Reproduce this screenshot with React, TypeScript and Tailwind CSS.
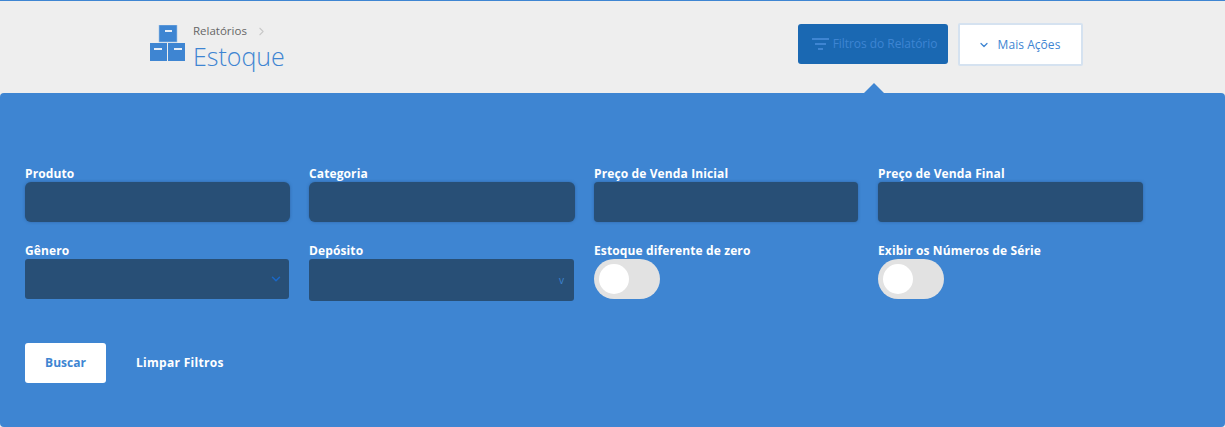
import { ChevronDown, ChevronRight } from "lucide-react";

const font = "font-['Open_Sans','Liberation_Sans',sans-serif]";

function BoxesIcon() {
  return (
    <svg width="36" height="37" viewBox="0 0 36 37" className="shrink-0">
      <rect x="9" y="0" width="18" height="17" fill="#3e85d2" stroke="#9fc2e8" strokeWidth="0.6" />
      <rect x="15" y="5" width="7" height="2" fill="#e6eef8" />
      <rect x="0" y="18" width="17" height="18" fill="#3e85d2" />
      <rect x="4" y="23" width="8" height="2" fill="#e6eef8" />
      <rect x="18" y="18" width="17" height="18" fill="#3e85d2" />
      <rect x="24" y="23" width="8" height="2" fill="#e6eef8" />
    </svg>
  );
}

function FilterIcon() {
  return (
    <svg width="17" height="13" viewBox="0 0 17 13" className="shrink-0" fill="#3e85d2">
      <rect x="0" y="0" width="17" height="2" />
      <rect x="3" y="5" width="11" height="2" />
      <rect x="6" y="10" width="5" height="2" />
    </svg>
  );
}

function Label({ text }: { text: string }) {
  return <label className="block h-[17px] text-[12px] leading-[17px] font-bold tracking-[0.12px] text-white whitespace-nowrap">{text}</label>;
}

function Input({ label, width, rounded = "rounded-[4px]" }: { label: string; width: string; rounded?: string }) {
  return (
    <div className={width}>
      <Label text={label} />
      <div className={`h-10 bg-[#284f76] shadow-[0_0_3px_rgba(30,70,120,0.5)] ${rounded}`} />
    </div>
  );
}

function Toggle({ label }: { label: string }) {
  return (
    <div>
      <Label text={label} />
      <div className="flex h-10 w-[66px] items-center rounded-full bg-[#e2e2e2] pl-[5px]">
        <div className="h-[30px] w-[30px] rounded-full bg-white" />
      </div>
    </div>
  );
}

export default function App() {
  return (
    <div className={`h-[427px] w-[1225px] overflow-hidden bg-[#eeeeee] ${font}`}>
      <div className="h-px bg-[#3e85d2]" />
      <header className="flex h-[92px] pl-[150px] pr-[142px]">
        <div className="flex pt-6">
          <BoxesIcon />
          <div className="ml-[7px]">
            <div className="flex h-[12px] items-center text-[11.5px] text-[#666666]">
              Relatórios
              <ChevronRight size={13} strokeWidth={2} className="ml-2 text-[#c8c8c8]" />
            </div>
            <h1 className="mt-[2px] text-[25px] leading-[34px] font-light text-[#3e85d2]">Estoque</h1>
          </div>
        </div>
        <div className="ml-auto flex gap-[10px] pt-[22px]">
          <button className="mt-px flex h-10 w-[150px] items-center justify-center gap-[4px] rounded-[3px] bg-[#1a68b2] pl-[3px] text-[12px] tracking-[-0.05px] text-[#3e85d2]">
            <FilterIcon />
            Filtros do Relatório
          </button>
          <button className="flex h-[43px] w-[125px] items-center justify-center gap-2 rounded-[2px] border-2 border-[#d5e2f0] bg-white pr-[3px] text-[12px] tracking-[0.05px] text-[#3e85d2]">
            <ChevronDown size={12} strokeWidth={2.5} />
            Mais Ações
          </button>
        </div>
      </header>

      <main className="relative h-[334px] rounded-[4px] bg-[#3e85d2] px-[25px] pt-[72px]">
        <div className="absolute -top-[10px] left-[864px] h-0 w-0 border-x-[10px] border-b-[10px] border-x-transparent border-b-[#3e85d2]" />
        <div className="flex gap-[19px]">
          <Input label="Produto" width="w-[265px]" rounded="rounded-[6px]" />
          <Input label="Categoria" width="w-[266px]" rounded="rounded-[6px]" />
          <Input label="Preço de Venda Inicial" width="mr-px w-[264px]" />
          <Input label="Preço de Venda Final" width="w-[265px]" />
        </div>
        <div className="mt-5 flex h-[59px] gap-[20px]">
          <div className="w-[264px]">
            <Label text="Gênero" />
            <div className="flex h-10 items-center justify-end rounded-[3px] bg-[#284f76] pr-[6px]">
              <ChevronDown size={14} strokeWidth={2.5} className="text-[#1a68c8]" />
            </div>
          </div>
          <div className="w-[265px]">
            <Label text="Depósito" />
            <div className="flex h-[42px] items-center justify-end rounded-[3px] bg-[#284f76] pr-[10px] text-[10px] text-[#3e85d2]">
              v
            </div>
          </div>
          <div className="w-[264px]">
            <Toggle label="Estoque diferente de zero" />
          </div>
          <Toggle label="Exibir os Números de Série" />
        </div>
        <div className="mt-[42px] flex items-center gap-[30px]">
          <button className="h-10 w-[81px] rounded-[3px] bg-white text-[12px] font-bold text-[#3e85d2]">Buscar</button>
          <button className="text-[12px] font-bold tracking-[0.3px] text-white">Limpar Filtros</button>
        </div>
      </main>
    </div>
  );
}
